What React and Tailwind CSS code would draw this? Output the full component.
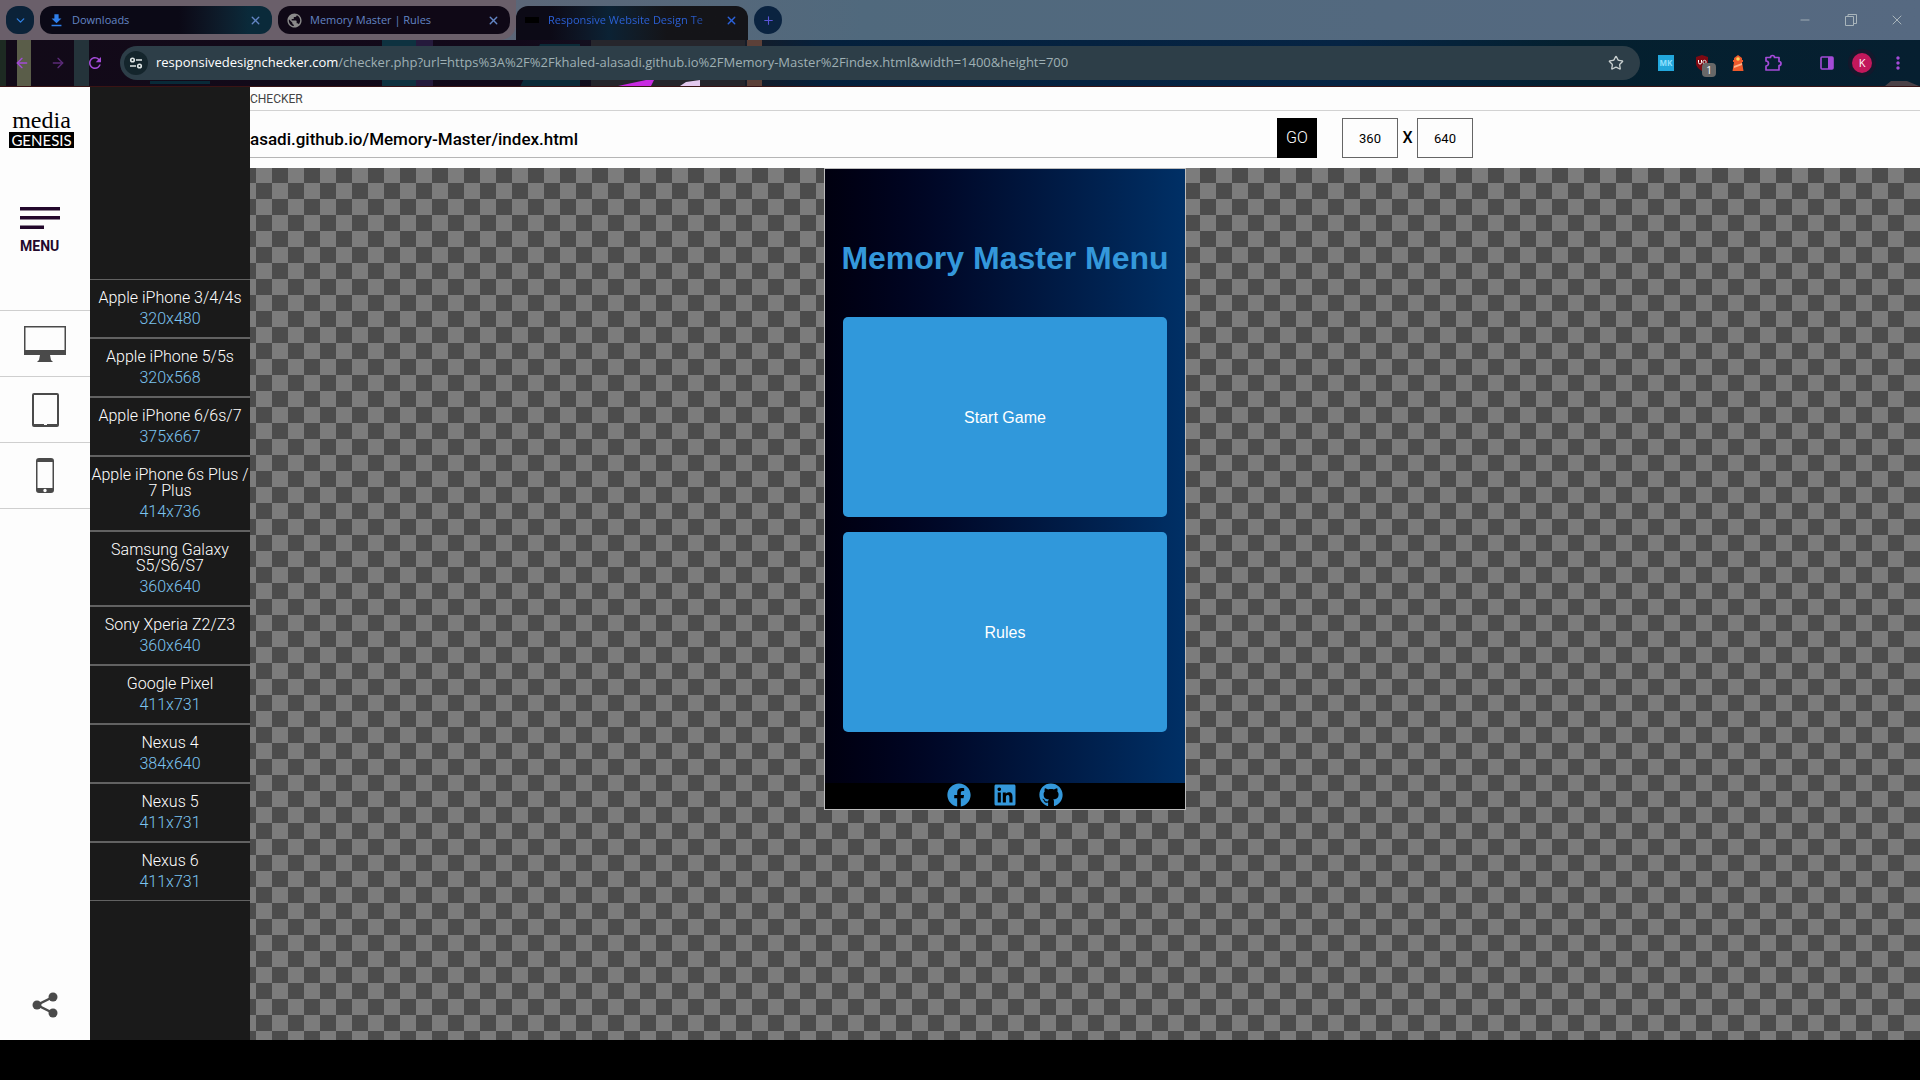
import React from "react";
import { FaFacebook, FaLinkedin, FaGithub } from "react-icons/fa";
import { ChevronDown, X, Plus, ArrowLeft, ArrowRight, Star, Minus } from "lucide-react";
import { MdDownload, MdRefresh, MdPublic, MdMoreVert } from "react-icons/md";

const DEVICES = [
  ["Apple iPhone 3/4/4s", "320x480"],
  ["Apple iPhone 5/5s", "320x568"],
  ["Apple iPhone 6/6s/7", "375x667"],
  ["Apple iPhone 6s Plus / 7 Plus", "414x736"],
  ["Samsung Galaxy S5/S6/S7", "360x640"],
  ["Sony Xperia Z2/Z3", "360x640"],
  ["Google Pixel", "411x731"],
  ["Nexus 4", "384x640"],
  ["Nexus 5", "411x731"],
  ["Nexus 6", "411x731"],
];

/* City-at-night theme picture behind the tab strip and toolbar. */
function ThemeArt() {
  return (
    <svg className="absolute inset-0 h-full w-full" viewBox="0 0 1920 87" preserveAspectRatio="none" aria-hidden="true">
      <defs>
        <linearGradient id="sky" x1="0" x2="1" y1="0" y2="0">
          <stop offset="0" stopColor="#120a18" />
          <stop offset="0.27" stopColor="#12091a" />
          <stop offset="0.39" stopColor="#151c28" />
          <stop offset="0.43" stopColor="#04203c" />
          <stop offset="0.7" stopColor="#062444" />
          <stop offset="0.82" stopColor="#04202f" />
          <stop offset="1" stopColor="#061f30" />
        </linearGradient>
      </defs>
      <rect width="1920" height="87" fill="url(#sky)" />
      <rect width="6" height="87" fill="#1d2a22" />
      <rect x="17" width="14" height="87" fill="#5a5d49" />
      <rect x="74" width="15" height="87" fill="#24333a" />
      <path d="M150 81h60v3h-60z" fill="#082a38" />
      <rect x="382" y="28" width="34" height="59" fill="#0e3240" />
      <rect x="416" y="30" width="17" height="57" fill="#251a3c" />
      <path d="M540 44h40v43h-60z" fill="#0b2b38" />
      <path d="M591 34l60-8 94-14v75H591z" fill="#26262c" />
      <path d="M618 86l28-6h8l-3 6z" fill="#c82be0" />
      <path d="M680 86l6-4 14-2v6z" fill="#e3c9ee" />
      <rect x="747" y="30" width="15" height="57" fill="#5c4038" />
      <path d="M1885 86l6-5h16l12 5z" fill="#4b4147" />
      <rect y="86" width="1920" height="1" fill="#3a1414" />
    </svg>
  );
}

function Tab({ icon, title, className, titleClass = "" }) {
  return (
    <div className={`flex items-center ${className}`}>
      <span className="flex w-8 shrink-0 justify-center">{icon}</span>
      <button className={`min-w-0 flex-1 text-left whitespace-nowrap ${titleClass}`}>{title}</button>
      <button aria-label="Close tab" className="shrink-0"><X size={13} strokeWidth={2.5} /></button>
    </div>
  );
}

const windowButton = "flex h-10 w-[46px] items-center justify-center";

function TabStrip() {
  return (
    <div className="relative flex h-10 items-start bg-linear-to-r from-[#6a6270] via-[#50697d] via-45% to-[#566981] font-['Open_Sans',sans-serif] text-[11px]">
      <div className="flex h-10 w-[516px] shrink-0 gap-1.5 rounded-br-2xl bg-[#6a5f6a] pt-1.5 pl-1.5 text-[#6385c4]">
        <button aria-label="Search tabs" className="flex size-7 items-center justify-center rounded-xl bg-[#0b2238] text-[#2f7fe0]">
          <ChevronDown size={13} strokeWidth={2.5} />
        </button>
        <Tab className="h-7 w-[232px] rounded-xl bg-linear-to-r from-[#0b0916] from-60% to-[#0a2a3a] to-90% pr-2.5" icon={<MdDownload size={17} className="text-[#2f7fea]" />} title="Downloads" />
        <Tab className="h-7 w-[232px] rounded-xl bg-[#0f0816] pr-2.5" icon={<MdPublic size={17} className="text-[#8a8a8a]" />} title="Memory Master | Rules" />
      </div>
      <Tab
        className="h-[34px] w-[232px] mt-1.5 shrink-0 rounded-t-xl bg-linear-to-r from-[#0c0a16] from-15% via-[#0b2234] via-40% to-[#141418] to-65% pr-2.5 pb-1.5 text-[#2b62dc]"
        icon={<span className="h-1.5 w-3.5 bg-black" />}
        title="Responsive Website Design Te"
        titleClass="bg-linear-to-r from-[#2b62dc] from-80% to-[#2b62dc]/20 bg-clip-text text-transparent"
      />
      <button aria-label="New tab" className="mt-1.5 ml-1.5 flex size-7 shrink-0 items-center justify-center rounded-full bg-[#0a2340] text-[#5b55d8]">
        <Plus size={13} />
      </button>
      <div className="ml-auto flex text-[#a9b5bb]">
        <button aria-label="Minimize" className={windowButton}><Minus size={14} strokeWidth={1.5} /></button>
        <button aria-label="Restore" className={windowButton}>
          <svg width="12" height="12" viewBox="0 0 12 12" fill="none" stroke="currentColor"><path d="M.5 2.500h8v9h-8zM3 2.500v-2h8.500v9h-3" /></svg>
        </button>
        <button aria-label="Close" className={windowButton}><X size={16} strokeWidth={1.5} /></button>
      </div>
    </div>
  );
}

function Toolbar() {
  return (
    <div className="relative mb-px flex h-[46px] items-center pr-3 font-['Open_Sans',sans-serif] text-[#a44bd8]">
      <button aria-label="Back" className="ml-3.5"><ArrowLeft size={16} /></button>
      <button aria-label="Forward" className="ml-5 opacity-50"><ArrowRight size={16} /></button>
      <button aria-label="Reload" className="ml-5"><MdRefresh size={18} /></button>
      <div className="ml-4 flex h-[34px] min-w-0 flex-1 items-center rounded-full bg-[#2d3e48] pr-4 pl-1">
        <button aria-label="Site information" className="flex size-6 items-center justify-center rounded-full bg-[#14252c] text-[#dfe6e6]">
          <svg width="14" height="14" viewBox="0 0 14 14" fill="none" stroke="currentColor" strokeWidth="1.6"><circle cx="3.500" cy="4" r="1.800" /><path d="M7 4h6M1 10h6" /><circle cx="10.500" cy="10" r="1.800" /></svg>
        </button>
        <a href="#page" className="ml-2 flex-1 overflow-hidden text-[13px] whitespace-nowrap text-[#9fb0b4]">
          <span className="text-white">responsivedesignchecker.com</span>/checker.php?url=https%3A%2F%2Fkhaled-alasadi.github.io%2FMemory-Master%2Findex.html&amp;width=1400&amp;height=700
        </a>
        <button aria-label="Bookmark" className="text-[#c8cfcf]"><Star size={16} /></button>
      </div>
      <div className="ml-[18px] flex items-center">
        <button className="flex size-4 items-center justify-center bg-[#22a7dc] text-[8px] font-bold text-[#8fe0ff]">MK</button>
        <button aria-label="Ad blocker, 1 blocked" className="relative ml-5">
          <svg width="16" height="16" viewBox="0 0 16 16"><path d="M8 0l6 2v6c0 4-3 6-6 8-3-2-6-4-6-8V2z" fill="#7d0912" /><path d="M4.500 5v2.500q0 1.500 1.500 1.500t1.500-1.500V5" fill="none" stroke="#fff" /><circle cx="10.500" cy="7" r="1.700" fill="none" stroke="#ddd" /></svg>
          <span className="absolute top-2 left-2 flex h-3.5 w-3.5 items-center justify-center rounded bg-[#686868] text-[10px] text-white">1</span>
        </button>
        <button aria-label="Lighthouse" className="ml-5">
          <svg width="16" height="16" viewBox="0 0 16 16"><path d="M8 0l4 3v2h1v2h-1l1.500 9h-11L4 7H3V5h1V3z" fill="#ee5a2c" /><circle cx="8" cy="4" r="1.800" fill="#ffd75a" /><path d="M4 11l8-3v2l-8 3z" fill="#ffb38a" /></svg>
        </button>
        <button aria-label="Extensions" className="ml-[18px]">
          <svg width="18" height="18" viewBox="0 0 18 18" fill="none" stroke="currentColor" strokeWidth="1.700" strokeLinejoin="round"><path d="M2 3.500h4.500a2 2 0 014 0H15V7.500a2 2 0 010 4V16H2v-4a2.400 2.400 0 000-5z" /></svg>
        </button>
        <button aria-label="Side panel" className="ml-[38px]">
          <svg width="14" height="14" viewBox="0 0 14 14"><rect x="1" y="1" width="12" height="12" rx="1" fill="none" stroke="currentColor" strokeWidth="1.600" /><path d="M8 1h5v12H8z" fill="currentColor" /></svg>
        </button>
        <button aria-label="Profile" className="ml-[18px] flex size-5 items-center justify-center rounded-full bg-[#c2185b] text-[11px] text-white ring-4 ring-[#14182c]">K</button>
        <button aria-label="More" className="ml-4"><MdMoreVert size={20} /></button>
      </div>
    </div>
  );
}

const railButton = "flex w-full items-center justify-center border-t border-[#cfcfcf]";

function Rail() {
  return (
    <nav className="flex w-[90px] shrink-0 flex-col bg-[#fdfdfd] text-[#4a4a4a]">
      <a href="#home" className="mt-[21px] ml-[9px] flex h-[42px] w-[65px] flex-col items-center text-black">
        <span className="font-['Liberation_Serif',serif] text-2xl leading-6">media</span>
        <span className="flex h-4 w-full items-center justify-center bg-black font-['Lato',sans-serif] text-[15px] leading-4 text-white">GENESIS</span>
      </a>
      <button className="mt-14 mb-14 ml-5 flex w-10 flex-col items-start text-[#23082c]">
        <svg width="40" height="24" viewBox="0 0 40 24" fill="currentColor"><path d="M0 1h40v3.500H0zM0 10h40v3.500H0zM0 19.500h24V23H0z" /></svg>
        <span className="mt-2 text-sm leading-4 font-bold">MENU</span>
      </button>
      <button aria-label="Desktop" className={`${railButton} h-[66px]`}>
        <svg width="44" height="36" viewBox="0 0 44 36"><path d="M1 0h42v29H27l1 5 2 2H14l2-2 1-5H1zM2.500 1.500V24h39V1.500z" fill="currentColor" fillRule="evenodd" /></svg>
      </button>
      <button aria-label="Tablet" className={`${railButton} h-[66px]`}>
        <svg width="27" height="34" viewBox="0 0 27 34"><rect x="1" y="1" width="25" height="32" rx="1" fill="none" stroke="currentColor" strokeWidth="2" /><path d="M1 31h11v1h3v-1h11v2H1z" fill="currentColor" /></svg>
      </button>
      <button aria-label="Phone" className={`${railButton} h-[67px] border-b`}>
        <svg width="18" height="35" viewBox="0 0 18 35"><path d="M3 0h12q3 0 3 3v29q0 3-3 3H3q-3 0-3-3V3q0-3 3-3zM1.500 4v26h15V4zM9 30.800a1.700 1.700 0 100 3.400 1.700 1.700 0 000-3.400z" fill="currentColor" fillRule="evenodd" /></svg>
      </button>
      <button aria-label="Share" className="mt-auto mb-[22px] flex justify-center">
        <svg width="26" height="26" viewBox="0 0 26 26" fill="currentColor"><path d="M21 5L5 13l16 8" fill="none" stroke="currentColor" strokeWidth="2.500" /><circle cx="21" cy="5" r="4.500" /><circle cx="5" cy="13" r="4.500" /><circle cx="21" cy="21" r="4.500" /></svg>
      </button>
    </nav>
  );
}

function DeviceList() {
  return (
    <aside className="w-40 shrink-0 bg-[#1a1a1a] pt-48 text-center text-base leading-4 font-light">
      <ul>
        {DEVICES.map(([name, size]) => (
          <li key={name}>
            <button className="w-full border-y border-[#626262] py-2.5">
              <span className="block text-white">{name}</span>
              <span className="mt-[5px] block text-[#7cc4f0]">{size}</span>
            </button>
          </li>
        ))}
      </ul>
    </aside>
  );
}

const sizeInput = "h-10 w-14 border border-[#666] text-center text-[13px] outline-none";
const menuCard = "flex h-[200px] w-[90%] items-center justify-center rounded-[5px] bg-[#3098db] pt-0.5 text-base text-white";

function PhonePreview() {
  return (
    <section className="flex h-[642px] w-[362px] flex-col items-center border border-[#bdbdbd] bg-linear-to-r from-[#00000f] to-[#003066] font-['Liberation_Sans',Arial,sans-serif]">
      <h1 className="mt-[71px] mb-[41px] text-[32px] leading-9 font-bold whitespace-nowrap text-[#3498db]">Memory Master Menu</h1>
      <div className="flex w-full flex-col items-center gap-[15px]">
        <button className={menuCard}>Start Game</button>
        <button className={menuCard}>Rules</button>
      </div>
      <footer className="mt-auto flex h-[26px] w-full justify-center gap-[22px] bg-black text-[#3498db]">
        <a href="#facebook" aria-label="Facebook"><FaFacebook size={24} /></a>
        <a href="#linkedin" aria-label="LinkedIn"><FaLinkedin size={24} /></a>
        <a href="#github" aria-label="GitHub"><FaGithub size={24} /></a>
      </footer>
    </section>
  );
}

export default function App() {
  return (
    <div className="flex min-h-screen flex-col bg-black font-['Roboto',sans-serif]">
      <header className="relative">
        <ThemeArt />
        <TabStrip />
        <Toolbar />
      </header>
      <main id="page" className="mb-10 flex flex-1">
        <Rail />
        <DeviceList />
        <div className="flex min-w-0 flex-1 flex-col">
          <div className="bg-[#fdfdfd]">
            <div className="flex h-6 items-center border-b border-[#d2d2d2] text-xs text-[#444]">CHECKER</div>
            <form className="flex h-[57px] items-start pt-[7px] text-black" onSubmit={(e) => e.preventDefault()}>
              <input aria-label="Website address" defaultValue="asadi.github.io/Memory-Master/index.html" className="h-10 w-[1027px] min-w-0 border-b border-[#b5b5b5] pt-0.5 text-[17px] font-medium outline-none" />
              <button className="size-10 shrink-0 bg-black text-base font-light text-white">GO</button>
              <input aria-label="Width" defaultValue="360" className={`${sizeInput} ml-[25px]`} />
              <span className="flex h-10 w-[19px] items-center justify-center text-base font-medium">X</span>
              <input aria-label="Height" defaultValue="640" className={sizeInput} />
            </form>
          </div>
          <div className="flex flex-1 justify-center bg-[repeating-conic-gradient(#4c4c4c_0_25%,#7c7c7c_0_50%)] bg-[length:32px_32px] bg-[position:-10px_15px] pr-40">
            <PhonePreview />
          </div>
        </div>
      </main>
    </div>
  );
}
